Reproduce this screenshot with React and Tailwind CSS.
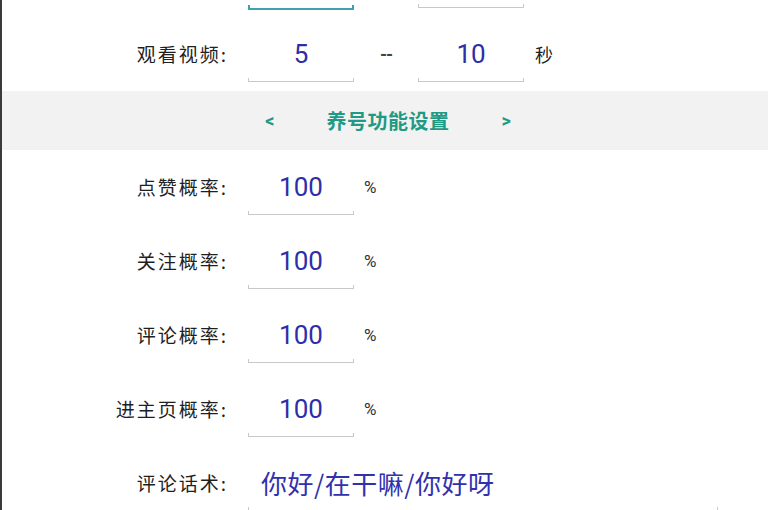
import React from "react";

const cjk = { fontFamily: '"Noto Sans CJK SC", "Noto Sans", sans-serif' };
const num = { fontFamily: 'Roboto, "Noto Sans CJK SC", sans-serif' };

const Underline = ({ focused, className = "" }) =>
  focused ? (
    <div className={"h-[5px] border-x-2 border-b-2 border-[#3f9fb3] " + className} />
  ) : (
    <div className={"h-[4px] border-x border-b border-[#c9c9c9] " + className} />
  );

const Field = ({ value, wide }) => (
  <div className={wide ? "flex w-[470px] flex-col" : "flex w-[106px] flex-col"}>
    <div
      style={wide ? cjk : num}
      className={
        wide
          ? "h-[32px] pl-[13px] text-left text-[26px] leading-[32px] tracking-[0.5px] text-[#3131ad]"
          : "h-[32px] text-center text-[26px] leading-[32px] text-[#2e2ea6]"
      }
    >
      {value}
    </div>
    <Underline className="mt-[8px]" />
  </div>
);

const Label = ({ children }) => (
  <div
    style={cjk}
    className="w-[226px] shrink-0 text-right text-[19px] leading-[32px] tracking-[2px] text-[#1f1f1f]"
  >
    {children}
  </div>
);

// percent rows
const rates = [
  { label: "点赞概率:", value: "100" },
  { label: "关注概率:", value: "100" },
  { label: "评论概率:", value: "100" },
  { label: "进主页概率:", value: "100" },
];

export default function App() {
  return (
    <div className="h-[510px] w-[768px] overflow-hidden border-l-2 border-[#3a3a3a] bg-white">
      {/* tail of the row above */}
      <div className="flex h-[17px]">
        <div className="w-[246px] shrink-0" />
        <div className="w-[106px] pt-[5px]">
          <Underline focused />
        </div>
        <div className="w-[64px]" />
        <div className="w-[106px] pt-[4px]">
          <Underline />
        </div>
      </div>

      {/* watch video */}
      <div className="flex h-[74px] items-start pt-[21px]">
        <Label>观看视频:</Label>
        <div className="ml-[20px]">
          <Field value="5" />
        </div>
        <div className="flex h-[32px] w-[64px] items-center justify-center text-[18px] font-bold tracking-[-1px] text-[#444]" style={num}>
          --
        </div>
        <Field value="10" />
        <div style={cjk} className="ml-[11px] text-[18px] leading-[32px] text-[#1f1f1f]">
          秒
        </div>
      </div>

      {/* section header */}
      <div className="flex h-[59px] items-center justify-center gap-[52px] bg-[#f2f2f2] pl-[6px] text-[#1f9a84]">
        <span className="text-[18px] font-bold" style={num}>&lt;</span>
        <span className="text-[20px] font-bold tracking-[0.5px]" style={cjk}>养号功能设置</span>
        <span className="text-[18px] font-bold" style={num}>&gt;</span>
      </div>

      {rates.map((r) => (
        <div key={r.label} className="flex h-[74px] items-start pt-[21px]">
          <Label>{r.label}</Label>
          <div className="ml-[20px]">
            <Field value={r.value} />
          </div>
          <div style={num} className="ml-[10px] text-[17px] leading-[32px] text-[#333]">
            %
          </div>
        </div>
      ))}

      {/* comment text */}
      <div className="flex h-[74px] items-start pt-[21px]">
        <Label>评论话术:</Label>
        <div className="ml-[20px]">
          <Field value="你好/在干嘛/你好呀" wide />
        </div>
      </div>
    </div>
  );
}
